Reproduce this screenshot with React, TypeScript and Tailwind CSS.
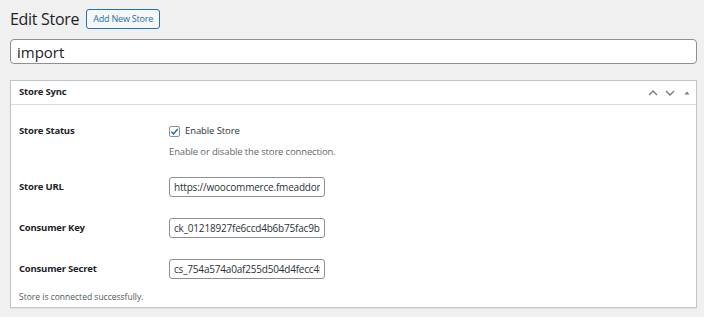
import React from "react";

const font = { fontFamily: '"Open Sans", "Noto Sans", sans-serif' };

function Row({ label, value }: { label: string; value: string }) {
  return (
    <div className="flex items-center h-[20px]">
      <div className="w-[150px] text-[9.5px] tracking-[-0.2px] font-bold text-[#1d2327]">{label}</div>
      <input
        readOnly
        value={value}
        className="w-[156px] h-[20px] border border-[#8c8f94] rounded-[3px] px-[4px] text-[10px] tracking-[-0.2px] text-[#2c3338] bg-white outline-none"
      />
    </div>
  );
}

export default function App() {
  return (
    <div className="w-[704px] h-[317px] bg-[#f0f0f1] px-[10px] pt-[9px] overflow-hidden" style={font}>
      <div className="flex items-center gap-[7px] h-[20px]">
        <h1 className="text-[16px] tracking-[-0.3px] leading-none text-[#1d2327]">Edit Store</h1>
        <button className="h-[20px] px-[6px] border border-[#2271b1] rounded-[3px] bg-[#f6f7f7] text-[9px] tracking-[-0.2px] text-[#2271b1]">
          Add New Store
        </button>
      </div>
      <input
        readOnly
        value="import"
        className="mt-[10px] w-[687px] h-[25px] border border-[#8c8f94] rounded-[4px] px-[6px] text-[15px] text-[#1d2327] bg-white outline-none"
      />
      <div className="mt-[16px] w-[687px] h-[228px] bg-white border border-[#c3c4c7] shadow-[0_1px_1px_rgba(0,0,0,0.04)]">
        <div className="flex items-center justify-between h-[24px] border-b border-[#dcdcde] pl-[8px] pr-[4px]">
          <span className="text-[9.5px] tracking-[-0.2px] font-bold text-[#1d2327]">Store Sync</span>
          <div className="flex items-center gap-[7px] text-[#787c82]">
            <svg width="10" height="10" viewBox="0 0 10 10" fill="none" stroke="currentColor" strokeWidth="1.4">
              <path d="M1 7 L5 3 L9 7" />
            </svg>
            <svg width="10" height="10" viewBox="0 0 10 10" fill="none" stroke="currentColor" strokeWidth="1.4">
              <path d="M1 3 L5 7 L9 3" />
            </svg>
            <svg width="10" height="10" viewBox="0 0 10 10" fill="currentColor">
              <path d="M2.5 6.5 L5 3.5 L7.5 6.5 Z" />
            </svg>
          </div>
        </div>
        <div className="pl-[8px] pt-[19px]">
          <div className="flex">
            <div className="w-[150px] text-[9.5px] tracking-[-0.2px] font-bold text-[#1d2327] leading-[14px]">Store Status</div>
            <div>
              <label className="flex items-center gap-[5px] text-[9.5px] tracking-[-0.1px] text-[#2c3338] leading-[14px]">
                <span className="w-[11px] h-[11px] border border-[#8c8f94] rounded-[2px] flex items-center justify-center bg-white">
                  <svg width="9" height="9" viewBox="0 0 10 10" fill="none" stroke="#2271b1" strokeWidth="1.6">
                    <path d="M1.5 5.2 L4 7.6 L8.6 2.2" />
                  </svg>
                </span>
                Enable Store
              </label>
              <div className="mt-[7px] text-[9.5px] tracking-[-0.15px] text-[#646970] leading-[14px]">
                Enable or disable the store connection.
              </div>
            </div>
          </div>
          <div className="mt-[18px] flex flex-col gap-[21px]">
            <Row label="Store URL" value="https://woocommerce.fmeaddons.com" />
            <Row label="Consumer Key" value="ck_01218927fe6ccd4b6b75fac9b1a2" />
            <Row label="Consumer Secret" value="cs_754a574a0af255d504d4fecc4f12" />
          </div>
          <div className="mt-[12px] text-[8.5px] text-[#50575e]">Store is connected successfully.</div>
        </div>
      </div>
    </div>
  );
}
